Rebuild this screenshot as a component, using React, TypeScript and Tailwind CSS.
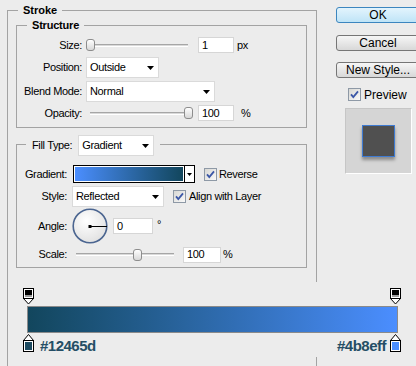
import React from "react";

const FONT = "font-['Liberation_Sans',Arial,sans-serif]";

function Arrow() {
    return (
        <svg width="7" height="4" viewBox="0 0 7 4">
            <polygon points="0,0 7,0 3.5,4" fill="#000" />
        </svg>
    );
}

function Check() {
    return (
        <svg width="13" height="13" viewBox="0 0 13 13" className="shrink-0">
            <defs>
                <linearGradient id="cbFill" x1="0" y1="0" x2="1" y2="1">
                    <stop offset="0" stopColor="#d6d6d2" />
                    <stop offset="1" stopColor="#fbfbfb" />
                </linearGradient>
            </defs>
            <rect x="0.5" y="0.5" width="12" height="12" fill="url(#cbFill)" stroke="#8e99a6" />
            <path d="M3 6.3 L5.3 9 L10 3.4" fill="none" stroke="#3b57a7" strokeWidth="1.8" />
        </svg>
    );
}

function Label(props: { text: string; className: string }) {
    return <div className={`${props.className} shrink-0 text-right`}>{props.text}</div>;
}

function Select(props: { value: string; className: string }) {
    return (
        <div className={`${props.className} h-[21px] shrink-0 bg-white border border-[#dadada] flex items-center justify-between pl-[3px] pr-[4px]`}>
            <span>{props.value}</span>
            <Arrow />
        </div>
    );
}

function TextBox(props: { value: string; className: string }) {
    return (
        <div className={`${props.className} h-[16px] shrink-0 bg-white border border-[#d6d6d6] pl-[3px] flex items-center`}>
            {props.value}
        </div>
    );
}

function Slider(props: { value: number; className?: string }) {
    return (
        <div className={`${props.className ?? ""} relative w-[106px] h-[14px] shrink-0 px-[4px] flex items-center`}>
            <div className="w-full h-[3px] border-t border-[#a6a6a6] bg-[#d9d9d9] border-b border-b-white" />
            <div
                className="absolute top-[1px] w-[9px] h-[12px] rounded-[3px] border border-[#8d8d8d] bg-linear-to-b from-white to-[#d8d8d8]"
                style={{ left: props.value * 98 }}
            />
        </div>
    );
}

function Button(props: { label: string; primary?: boolean; className?: string }) {
    const look = props.primary
        ? "border-[#3c86bf] bg-linear-to-b from-[#e3f4fd] to-[#bfe4f7]"
        : "border-[#767676] bg-linear-to-b from-[#f6f6f6] to-[#d8d8d8]";
    return (
        <div className={`${props.className ?? ""} ${look} h-[16px] w-[84px] rounded-[3px] border flex items-center justify-center text-[12px] leading-none`}>
            {props.label}
        </div>
    );
}

function Dial() {
    return (
        <svg width="36" height="36" viewBox="0 0 36 36" className="shrink-0">
            <defs>
                <radialGradient id="dialFill" cx="0.4" cy="0.35" r="0.7">
                    <stop offset="0" stopColor="#ffffff" />
                    <stop offset="1" stopColor="#e0e0e0" />
                </radialGradient>
            </defs>
            <circle cx="18" cy="18" r="16.8" fill="url(#dialFill)" stroke="#4b6590" strokeWidth="1.6" />
            <line x1="18" y1="18.5" x2="35" y2="18.5" stroke="#000" />
            <rect x="16.5" y="17" width="3" height="3" fill="#000" />
        </svg>
    );
}

function TopStop() {
    return (
        <svg width="11" height="17" viewBox="0 0 11 17">
            <path d="M0.5 10.5 L5.5 16 L10.5 10.5" fill="#fff" stroke="#000" />
            <rect x="0.5" y="0.5" width="10" height="10" fill="#fff" stroke="#000" />
            <rect x="2" y="2" width="7" height="5" fill="#000" />
            <rect x="2" y="7" width="7" height="2" fill="#9c9c9c" />
        </svg>
    );
}

function BottomStop(props: { color: string }) {
    return (
        <svg width="11" height="18" viewBox="0 0 11 18" className="shrink-0">
            <path d="M0.5 6.5 L5.5 0.5 L10.5 6.5" fill="#fff" stroke="#000" />
            <rect x="0.5" y="6.5" width="10" height="11" fill="#fff" stroke="#000" />
            <rect x="2" y="8" width="7" height="8" fill={props.color} />
        </svg>
    );
}

export default function App() {
    return (
        <div className={`${FONT} relative w-[416px] h-[366px] overflow-hidden bg-[#ececec] text-[11px] tracking-[-0.35px] text-black flex`}>
            {/* Stroke group */}
            <div className="ml-[7px] mt-[10px] w-[310px] shrink-0 border border-b-0 border-[#a3a3a3]">
                <div className="-mt-[7px] ml-[10px] w-fit px-[5px] h-[13px] leading-[13px] bg-[#ececec] font-bold tracking-normal">
                    Stroke
                </div>

                {/* Structure */}
                <div className="mt-[8px] ml-[8px] w-[291px] border border-[#a3a3a3] pb-[6px]">
                    <div className="-mt-[7px] ml-[10px] w-fit px-[5px] h-[13px] leading-[13px] bg-[#ececec] font-bold tracking-[-0.2px]">
                        Structure
                    </div>
                    <div className="mt-[5px] h-[16px] flex items-center">
                        <Label text="Size:" className="w-[65px]" />
                        <Slider value={0} className="ml-[4px]" />
                        <TextBox value="1" className="ml-[6px] w-[36px]" />
                        <span className="ml-[3px]">px</span>
                    </div>
                    <div className="mt-[4px] h-[21px] flex items-center">
                        <Label text="Position:" className="w-[65px]" />
                        <Select value="Outside" className="ml-[4px] w-[73px]" />
                    </div>
                    <div className="mt-[3px] h-[21px] flex items-center">
                        <Label text="Blend Mode:" className="w-[65px]" />
                        <Select value="Normal" className="ml-[4px] w-[129px]" />
                    </div>
                    <div className="mt-[3px] h-[16px] flex items-center">
                        <Label text="Opacity:" className="w-[65px]" />
                        <Slider value={1} className="ml-[4px]" />
                        <TextBox value="100" className="ml-[6px] w-[36px]" />
                        <span className="ml-[7px]">%</span>
                    </div>
                </div>

                {/* Fill */}
                <div className="mt-[16px] ml-[8px] w-[291px] border border-[#a3a3a3] pb-[5px]">
                    <div className="-mt-[10px] ml-[9px] w-fit px-[6px] h-[21px] bg-[#ececec] flex items-center">
                        <span>Fill Type:</span>
                        <Select value="Gradient" className="ml-[6px] w-[76px]" />
                    </div>
                    <div className="mt-[9px] h-[18px] flex items-center">
                        <Label text="Gradient:" className="w-[50px]" />
                        <div className="ml-[6px] w-[122px] h-[18px] shrink-0 border border-black flex">
                            <div className="flex-1 bg-white p-[1px]">
                                <div className="h-full bg-linear-to-r from-[#4b8eff] to-[#12465d]" />
                            </div>
                            <div className="w-[10px] border-l border-black bg-white flex items-center justify-center">
                                <svg width="5" height="3" viewBox="0 0 5 3">
                                    <polygon points="0,0 5,0 2.5,3" fill="#000" />
                                </svg>
                            </div>
                        </div>
                        <div className="ml-[9px]"><Check /></div>
                        <span className="ml-[2px]">Reverse</span>
                    </div>
                    <div className="mt-[3px] h-[21px] flex items-center">
                        <Label text="Style:" className="w-[50px]" />
                        <Select value="Reflected" className="ml-[5px] w-[92px]" />
                        <div className="ml-[9px]"><Check /></div>
                        <span className="ml-[3px]">Align with Layer</span>
                    </div>
                    <div className="mt-[1px] h-[36px] flex items-center">
                        <Label text="Angle:" className="w-[50px]" />
                        <div className="ml-[5px]"><Dial /></div>
                        <TextBox value="0" className="ml-[5px] w-[40px]" />
                        <span className="ml-[4px] h-[16px] leading-[12px]">°</span>
                    </div>
                    <div className="mt-[3px] h-[15px] flex items-center">
                        <Label text="Scale:" className="w-[50px]" />
                        <Slider value={0.62} className="ml-[5px]" />
                        <TextBox value="100" className="ml-[5px] w-[38px]" />
                        <span className="ml-[2px]">%</span>
                    </div>
                </div>
            </div>

            {/* buttons + preview */}
            <div className="ml-[19px] pt-[7px] w-[84px] shrink-0 flex flex-col tracking-normal">
                <Button label="OK" primary />
                <Button label="Cancel" className="mt-[12px]" />
                <Button label="New Style..." className="mt-[11px]" />
                <div className="mt-[10px] ml-[12px] h-[13px] flex items-center">
                    <Check />
                    <span className="ml-[3px] text-[12px] leading-none">Preview</span>
                </div>
                <div className="mt-[7px] ml-[9px] w-[67px] h-[66px] bg-[#d5d5d5] border border-[#c6c6c6] border-r-white border-b-white flex items-center justify-center">
                    <div className="w-[33px] h-[32px] bg-[#505050] border border-[#3f7bd2] shadow-[0_3px_3px_rgba(0,0,0,0.35)]" />
                </div>
            </div>

            {/* gradient editor strip pasted over the dialog */}
            <div className="absolute left-[18px] top-[282px] w-[392px] h-[75px] bg-[#ececec] tracking-normal">
                <div className="mt-[6px] pl-[5px] pr-[9px] flex justify-between">
                    <TopStop />
                    <TopStop />
                </div>
                <div className="mt-[1px] ml-[9px] w-[371px] h-[27px] border border-[#8a8a8a] bg-linear-to-r from-[#12465d] to-[#4b8eff]" />
                <div className="mt-[1px] pl-[5px] pr-[9px] flex items-start text-[15px] font-bold leading-none tracking-[-0.5px] text-[#244e65]">
                    <BottomStop color="#1c4a60" />
                    <span className="ml-[6px] mt-[4px]">#12465d</span>
                    <span className="ml-auto mr-[4px] mt-[4px]">#4b8eff</span>
                    <BottomStop color="#4b8eff" />
                </div>
            </div>
        </div>
    );
}
